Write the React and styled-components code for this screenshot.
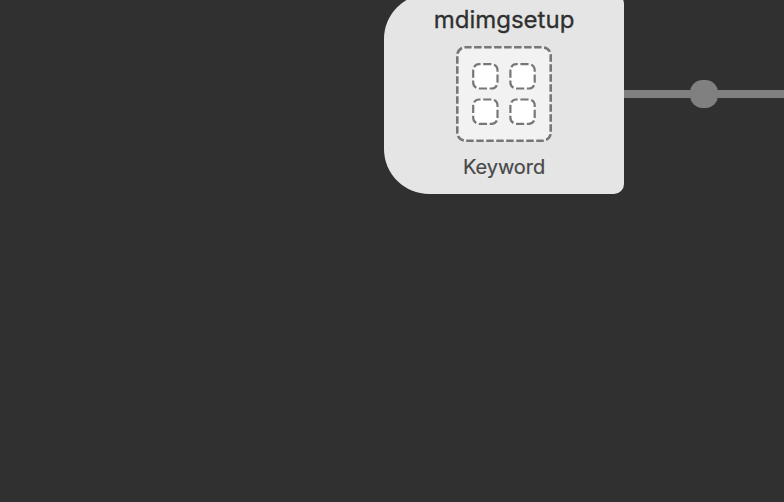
import React from "react";
import styled, { createGlobalStyle } from "styled-components";

const GlobalStyle = createGlobalStyle`
  body { margin: 0; background: #303030; overflow: hidden; }
`;

const Canvas = styled.main`
  width: 784px;
  height: 502px;
  overflow: hidden;
  background: #303030;
  font-family: Inter, "Liberation Sans", sans-serif;
`;

const Flow = styled.div`
  display: flex;
  align-items: center;
  height: 200px;
  margin: -6px 0 0 384px;
`;

const NodeCard = styled.section`
  display: flex;
  flex: none;
  flex-direction: column;
  align-items: center;
  box-sizing: border-box;
  width: 240px;
  height: 200px;
  padding-top: 10px;
  border-radius: 45px 10px 10px 45px;
  background: #e5e5e5;
`;

const Title = styled.h1`
  margin: 0;
  height: 32px;
  font-size: 24px;
  font-weight: 400;
  line-height: 32px;
  -webkit-text-stroke: 0.3px #303030;
  color: #303030;
  white-space: nowrap;
`;

const Icon = styled.svg`
  display: block;
  flex: none;
  width: 96px;
  height: 96px;
  margin-top: 10px;
`;

const Caption = styled.p`
  margin: 11px 0 0;
  font-size: 20px;
  line-height: 28px;
  letter-spacing: -0.05px;
  -webkit-text-stroke: 0.2px #484848;
  color: #484848;
`;

const Wire = styled.div`
  flex: none;
  width: ${(p) => p.$width}px;
  height: 8px;
  background: #808080;
`;

const Joint = styled.div`
  flex: none;
  width: 28px;
  height: 28px;
  border-radius: 12.5px;
  background: #808080;
`;

const tiles = [
  [17.2, 18.2],
  [54.4, 18.2],
  [17.2, 53.5],
  [54.4, 53.5],
];

function KeywordIcon() {
  return (
    <Icon viewBox="0 0 96 96" fill="none" stroke="#777">
      <rect
        x="1.3"
        y="1.3"
        width="93.4"
        height="93.4"
        rx="8"
        fill="#f2f2f2"
        strokeWidth="2.6"
        strokeDasharray="7.5 2.497"
        strokeDashoffset="-8.8"
      />
      {tiles.map(([x, y]) => (
        <rect
          key={`${x}-${y}`}
          x={x}
          y={y}
          width="24.3"
          height="24.3"
          rx="6"
          fill="#fff"
          strokeWidth="2.2"
          strokeDasharray="8.2 2.66"
          strokeDashoffset="-4"
        />
      ))}
    </Icon>
  );
}

export default function App() {
  return (
    <>
      <GlobalStyle />
      <Canvas>
        <Flow>
          <NodeCard>
            <Title>mdimgsetup</Title>
            <KeywordIcon />
            <Caption>Keyword</Caption>
          </NodeCard>
          <Wire $width={66} />
          <Joint />
          <Wire $width={66} />
        </Flow>
      </Canvas>
    </>
  );
}
